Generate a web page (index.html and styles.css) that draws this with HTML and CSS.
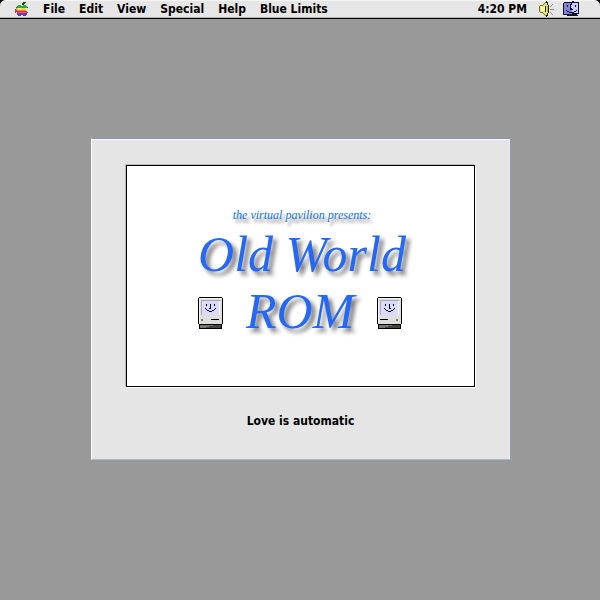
FILE: index.html
```html
<!DOCTYPE html>
<html lang="en">
<head>
<meta charset="utf-8">
<title>Old World ROM</title>
<link rel="stylesheet" href="styles.css">
</head>
<body>
<header class="menubar">
  <nav class="menus" aria-label="Main menu">
    <button class="menu apple" type="button" aria-label="Apple menu">
      <svg width="14" height="16" viewBox="0 0 14 16" shape-rendering="crispEdges" aria-hidden="true">
        <path fill="#174f20" d="M8 1h3v1h-1v1H9v1H7V2h1z"/>
        <path fill="#39a63c" d="M3 4h3v1h2V4h3v1h1v1h1v1H1V6h1V5h1z"/>
        <path fill="#f6d83c" d="M2 7h9v2H2z"/>
        <path fill="#ef8b28" d="M1 7h1v2H1zM2 9h9v1H2z"/>
        <path fill="#d9304f" d="M1 9h1v2H1zM2 10h10v2H2zM12 11h1v1h-1z"/>
        <path fill="#e04fae" d="M3 11h8v1H3z"/>
        <path fill="#8b349b" d="M2 12h10v2H2z"/>
        <path fill="#354ea8" d="M3 14h3v1H3zM8 14h3v1H8zM2 13h1v1H2zM11 13h1v1h-1z"/>
        <path fill="#246c2b" d="M2 5h1v1H2zM1 6h1v1H1zM12 6h1v1h-1z"/>
        <path fill="#b64035" d="M0 8h1v4H0z"/>
        <path fill="#fff5a0" d="M3 7h3v1H3zM3 8h1v1H3z"/>
      </svg>
    </button>
    <button class="menu" type="button">File</button>
    <button class="menu" type="button">Edit</button>
    <button class="menu" type="button">View</button>
    <button class="menu" type="button">Special</button>
    <button class="menu" type="button">Help</button>
    <button class="menu" type="button">Blue Limits</button>
  </nav>
  <div class="status">
    <time datetime="16:20">4:20 PM</time>
    <button class="menu sound" type="button" aria-label="Sound">
      <svg width="16" height="16" viewBox="0 0 16 16" shape-rendering="crispEdges" aria-hidden="true">
        <path fill="#e8e36c" d="M1 5h3V4h1V3h1V2h1V1h2v14H7v-1H6v-1H5v-1H4v-1H1z"/>
        <path fill="#fffbb0" d="M2 6h3V5h1v5H2z"/>
        <path fill="#77722c" d="M0 5h1v6H0zM1 4h3v1H1zM1 11h3v1H1zM4 3h1v1H4zM5 2h1v1H5zM6 1h1v1H6zM4 12h1v1H4zM5 13h1v1H5zM6 14h1v1H6z"/>
        <path fill="#222" d="M7 0h1v2H7zM7 14h1v2H7zM8 1h1v3H8zM8 12h1v3H8zM9 4h1v8H9zM6 5h1v6H6z"/>
        <path fill="#b7b15b" d="M8 5h1v6H8z"/>
        <path fill="#888" d="M11 8h4v1h-4zM11 5h1v1h-1zM12 4h1v1h-1zM13 3h1v1h-1zM11 11h1v1h-1zM12 12h1v1h-1zM13 13h1v1h-1z"/>
      </svg>
    </button>
    <button class="menu finder" type="button" aria-label="Finder">
      <svg width="17" height="16" viewBox="0 0 17 16" shape-rendering="crispEdges" aria-hidden="true">
        <path fill="#111129" d="M0 2h1V1h8V0h2v1h5v12h-2v1h1v1H4v-1H0z"/>
        <path fill="#8583d8" d="M1 2h7v1H7v5h2v5H1z"/>
        <path fill="#c9caff" d="M9 2h6v10H9V7H8V3h1z"/>
        <path fill="#111129" d="M4 4h1v2H4zM12 4h1v2h-1zM8 2h1v2H8zM7 4h1v4h2v1H7zM3 9h1v1H3zM4 10h2v1H4zM6 11h5v1H6zM11 10h2v1h-2zM13 9h1v1h-1z"/>
      </svg>
    </button>
  </div>
</header>

<main class="desktop">
  <section class="dialog">
    <div class="splash">
      <p class="presents">the virtual pavilion presents:</p>
      <h1 class="title">
        <span>Old World</span>
        <span class="title-row">
          <svg class="mac" width="25" height="32" viewBox="0 0 25 32" shape-rendering="crispEdges" aria-hidden="true">
            <path fill="#000" d="M1 0h23v1h1v26h-1v5H1v-5H0V1h1z"/>
            <path fill="#dedede" d="M1 1h23v26H1z"/>
            <path fill="#f4f4f4" d="M1 1h22v1H2v24H1z"/>
            <path fill="#aaa" d="M3 3h19v1H4v14H3z"/>
            <path fill="#dadaff" d="M4 4h17v14H4z"/>
            <path fill="#fff" d="M4 18h18V4h-1v14z"/>
            <path fill="#000" d="M8 7h1v2H8zM16 7h1v2h-1zM12 7h1v5h-2v-1h1zM7 11h1v1H7zM17 11h1v1h-1zM8 12h1v1H8zM16 12h1v1h-1zM9 13h2v1H9zM14 13h2v1h-2zM11 14h3v1h-3zM13 22h8v1h-8z"/>
            <path fill="#35b33b" d="M3 22h1v2H3z"/>
            <path fill="#e34232" d="M4 22h1v2H4z"/>
            <path fill="#444" d="M2 28h21v3H2z"/>
            <path fill="#777" d="M2 28h13v1H2zM2 29h9v1H2zM2 30h6v1H2z"/>
          </svg>
          <span>ROM</span>
          <svg class="mac" width="25" height="32" viewBox="0 0 25 32" shape-rendering="crispEdges" aria-hidden="true">
            <path fill="#000" d="M1 0h23v1h1v26h-1v5H1v-5H0V1h1z"/>
            <path fill="#dedede" d="M1 1h23v26H1z"/>
            <path fill="#f4f4f4" d="M1 1h22v1H2v24H1z"/>
            <path fill="#aaa" d="M3 3h19v1H4v14H3z"/>
            <path fill="#dadaff" d="M4 4h17v14H4z"/>
            <path fill="#fff" d="M4 18h18V4h-1v14z"/>
            <path fill="#000" d="M8 7h1v2H8zM16 7h1v2h-1zM12 7h1v4h1v1h-2zM7 11h1v1H7zM17 11h1v1h-1zM8 12h1v1H8zM16 12h1v1h-1zM9 13h2v1H9zM14 13h2v1h-2zM11 14h3v1h-3zM3 22h8v1H3z"/>
            <path fill="#35b33b" d="M19 22h1v2h-1z"/>
            <path fill="#e34232" d="M20 22h1v2h-1z"/>
            <path fill="#444" d="M2 28h21v3H2z"/>
            <path fill="#777" d="M2 28h13v1H2zM2 29h9v1H2zM2 30h6v1H2z"/>
          </svg>
        </span>
      </h1>
    </div>
    <p class="caption">Love is automatic</p>
  </section>
</main>
</body>
</html>
```
FILE: styles.css
```css
* {
  box-sizing: border-box;
}

body {
  margin: 0;
  min-height: 100vh;
  display: flex;
  flex-direction: column;
  background: #000;
  color: #000;
  font: bold 12px/16px "DejaVu Sans Condensed", "DejaVu Sans", sans-serif;
}

.menubar {
  display: flex;
  justify-content: space-between;
  height: 19px;
  padding: 0 20px 0 15px;
  background: #e6e6e6;
  border-bottom: 1px solid #000;
  border-radius: 6px 6px 0 0;
  box-shadow: inset 0 1px #f4f4f4, inset 0 -1px #b5b5b5;
}

.menus,
.status {
  display: flex;
  align-items: center;
}

.menus {
  gap: 14px;
}

.status {
  gap: 8px;
}

.menu {
  display: flex;
  padding: 0;
  border: 0;
  background: none;
  color: inherit;
  font: inherit;
}

.sound {
  margin-left: 4px;
}

.desktop {
  flex: 1;
  display: flex;
  align-items: center;
  justify-content: center;
  padding: 0 0 22px 2px;
  background: #999;
}

.dialog {
  width: 70%;
  min-width: 420px;
  padding: 26px 35px 30px 34px;
  background: #e5e5e5;
  border: 1px solid;
  border-color: #8293b3 #8d9fbd #a9b4c5 #fff;
  box-shadow: inset 0 1px #fff;
}

.splash {
  display: flex;
  flex-direction: column;
  align-items: center;
  gap: 3px;
  padding: 41px 0 46px 3px;
  background: #fff;
  border: 1px solid #000;
  box-shadow: -1px -1px #bbb, 1px 1px #fff;
}

.presents,
.title {
  margin: 0;
  font-family: "Liberation Serif", serif;
  font-style: italic;
  font-weight: normal;
  text-align: center;
}

.presents {
  color: #1474f0;
  font-size: 12px;
  line-height: 16px;
  text-shadow: 3px 4px 3px #888;
}

.title {
  color: #2468f5;
  font-size: 50px;
  line-height: 57px;
  text-shadow: 4px 4px 4px #777;
}

.title > span {
  display: block;
}

.title .title-row {
  display: flex;
  align-items: center;
  gap: 23px;
}

.mac {
  margin-top: 4px;
}

.caption {
  margin: 26px 0 0;
  text-align: center;
}
```
